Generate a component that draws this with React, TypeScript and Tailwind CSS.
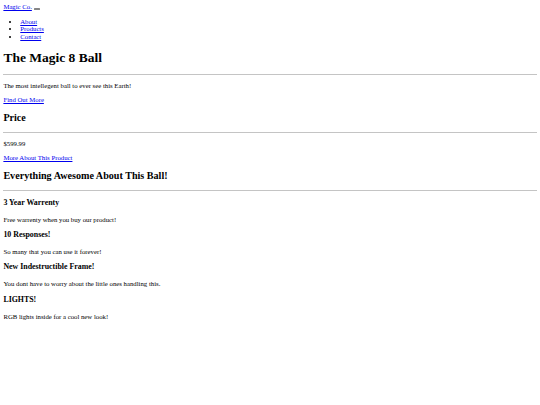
const features = [
    { title: '3 Year Warrenty', text: 'Free warrenty when you buy our product!' },
    { title: '10 Responses!', text: 'So many that you can use it forever!' },
    { title: 'New Indestructible Frame!', text: 'You dont have to worry about the little ones handling this.' },
    { title: 'LIGHTS!', text: 'RGB lights inside for a cool new look!' },
];

const link = 'text-[#0000ee] underline';

export default function App() {
    return (
        <div className="min-h-[405px] bg-white p-[3.375px] text-[6.75px] leading-[1.13] text-black font-['Liberation_Serif','Times_New_Roman',serif]">
            {/* Nav */}
            <nav>
                <a href="#" className={link}>Magic Co.</a>{' '}
                <button className="inline-block w-[6.75px] h-[2.5px] align-baseline bg-[#efefef] border-[0.5px] border-[#858585] rounded-[0.5px]" />
                <ul className="list-disc my-[1em] pl-[16.875px]">
                    <li><a href="#" className={link}>About</a></li>
                    <li><a href="#" className={link}>Products</a></li>
                    <li><a href="#" className={link}>Contact</a></li>
                </ul>
            </nav>

            <h1 className="text-[2em] font-bold my-[0.67em]">The Magic 8 Ball</h1>
            <hr className="my-[0.5em] border-t border-[#c4c4c4]" />
            <p className="my-[1em]">The most intellegent ball to ever see this Earth!</p>
            <a href="#" className={link}>Find Out More</a>

            <h2 className="text-[1.5em] font-bold my-[0.83em]">Price</h2>
            <hr className="my-[0.5em] border-t border-[#c4c4c4]" />
            <p className="my-[1em]">$599.99</p>
            <a href="#" className={link}>More About This Product</a>

            <h2 className="text-[1.5em] font-bold my-[0.83em]">Everything Awesome About This Ball!</h2>
            <hr className="my-[0.5em] border-t border-[#c4c4c4]" />
            {features.map((f) => (
                <div key={f.title}>
                    <h3 className="text-[1.17em] font-bold my-[1em]">{f.title}</h3>
                    <p className="my-[1em]">{f.text}</p>
                </div>
            ))}
        </div>
    );
}
